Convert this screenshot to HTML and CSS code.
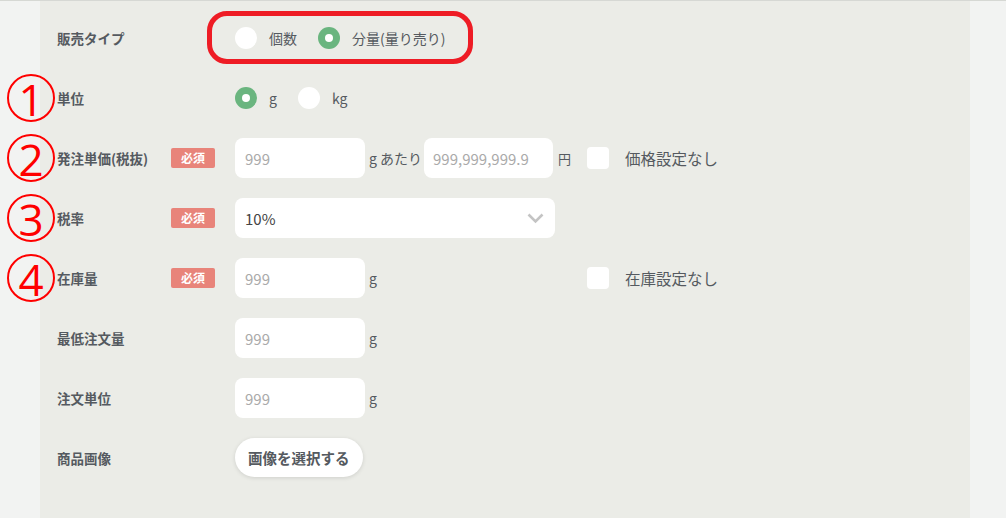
FILE: index.html
```html
<!DOCTYPE html>
<html lang="ja">
<head>
    <meta charset="UTF-8">
    <title>商品登録</title>
    <link rel="stylesheet" href="styles.css">
</head>
<body>
    <div class="panel">
        <div class="row">
            <div class="label-cell"><span class="label">販売タイプ</span></div>
            <div class="radio-group boxed">
                <label class="radio"><span class="dot"></span>個数</label>
                <label class="radio"><span class="dot on"></span>分量(量り売り)</label>
            </div>
        </div>

        <div class="row">
            <span class="mark">1</span>
            <div class="label-cell"><span class="label">単位</span></div>
            <div class="radio-group">
                <label class="radio"><span class="dot on"></span>g</label>
                <label class="radio"><span class="dot"></span>kg</label>
            </div>
        </div>

        <div class="row">
            <span class="mark">2</span>
            <div class="label-cell"><span class="label">発注単価(税抜)</span><span class="req">必須</span></div>
            <div class="field-main">
                <input class="text" type="text" placeholder="999">
                <span class="unit">g あたり</span>
                <input class="text price" type="text" placeholder="999,999,999.9">
                <span class="unit yen">円</span>
            </div>
            <label class="check"><span class="box"></span>価格設定なし</label>
        </div>

        <div class="row">
            <span class="mark">3</span>
            <div class="label-cell"><span class="label">税率</span><span class="req">必須</span></div>
            <div class="select">
                <span>10%</span>
                <svg width="17" height="11" viewBox="0 0 17 11"><path d="M1.5 1.5 L8.5 8.5 L15.5 1.5" fill="none" stroke="#c4c4c4" stroke-width="2.6"/></svg>
            </div>
        </div>

        <div class="row">
            <span class="mark">4</span>
            <div class="label-cell"><span class="label">在庫量</span><span class="req">必須</span></div>
            <div class="field-main">
                <input class="text" type="text" placeholder="999">
                <span class="unit">g</span>
            </div>
            <label class="check"><span class="box"></span>在庫設定なし</label>
        </div>

        <div class="row">
            <div class="label-cell"><span class="label">最低注文量</span></div>
            <input class="text" type="text" placeholder="999">
            <span class="unit">g</span>
        </div>

        <div class="row">
            <div class="label-cell"><span class="label">注文単位</span></div>
            <input class="text" type="text" placeholder="999">
            <span class="unit">g</span>
        </div>

        <div class="row">
            <div class="label-cell"><span class="label">商品画像</span></div>
            <button class="pick">画像を選択する</button>
        </div>
    </div>
</body>
</html>
```

FILE: styles.css
```css
body {
    margin: 0;
    background: #f2f3f2;
    border-top: 1px solid #d6d8d4;
    font-family: "Noto Sans CJK JP", "Noto Sans", sans-serif;
    color: #555a60;
}
.panel {
    background: #ebece7;
    margin: 0 36px 0 40px;
    padding: 7px 17px 0;
    height: 517px;
    box-sizing: border-box;
}
.row {
    position: relative;
    display: flex;
    align-items: center;
    height: 60px;
}
.mark {
    position: absolute;
    left: -50px;
    top: 6px;
    width: 48px;
    height: 48px;
    box-sizing: border-box;
    border: 2.5px solid #ff0000;
    border-radius: 50%;
    display: flex;
    align-items: center;
    justify-content: center;
    font-family: "Open Sans", "Noto Sans", sans-serif;
    font-size: 44px;
    line-height: 1;
    padding-top: 1px;
    color: #ff0000;
}
.label-cell {
    display: flex;
    align-items: center;
    width: 178px;
    flex-shrink: 0;
}
.label {
    width: 114px;
    font-size: 13.5px;
    font-weight: bold;
    white-space: nowrap;
}
.req {
    width: 44px;
    height: 20px;
    line-height: 20px;
    background: #e8847a;
    color: #fff;
    font-size: 12px;
    font-weight: bold;
    text-align: center;
    border-radius: 2px;
}
.radio-group {
    position: relative;
    display: flex;
    align-items: center;
}
.boxed::before {
    content: "";
    position: absolute;
    left: -28px;
    top: -16px;
    width: 266px;
    height: 53px;
    box-sizing: border-box;
    border: 5px solid #ee1c25;
    border-radius: 20px;
}
.radio {
    display: flex;
    align-items: center;
    font-size: 14px;
    margin-right: 21px;
}
.dot {
    width: 22px;
    height: 22px;
    border-radius: 50%;
    background: #fff;
    margin-right: 12px;
    position: relative;
}
.dot.on {
    background: #6ab57f;
}
.dot.on::after {
    content: "";
    position: absolute;
    left: 7px;
    top: 7px;
    width: 8px;
    height: 8px;
    border-radius: 50%;
    background: #fff;
}
.field-main {
    display: flex;
    align-items: center;
    width: 352px;
    flex-shrink: 0;
}
.text {
    width: 130px;
    height: 40px;
    box-sizing: border-box;
    border: none;
    border-radius: 8px;
    background: #fff;
    padding: 0 10px;
    font-family: inherit;
    font-size: 15px;
    color: #444;
    outline: none;
}
.text::placeholder {
    color: #aaaaaa;
}
.text.price {
    width: 129px;
    margin-left: 2px;
    padding-left: 9px;
}
.unit {
    margin-left: 4px;
    font-size: 14px;
}
.unit.yen {
    margin-left: 5px;
    font-size: 13px;
}
.check {
    display: flex;
    align-items: center;
    font-size: 15.5px;
}
.box {
    width: 22px;
    height: 22px;
    background: #fff;
    border-radius: 4px;
    margin-right: 16px;
}
.select {
    display: flex;
    align-items: center;
    justify-content: space-between;
    width: 320px;
    height: 40px;
    box-sizing: border-box;
    background: #fff;
    border-radius: 8px;
    padding: 0 11px 0 10px;
    font-size: 15px;
    color: #444;
}
.pick {
    height: 39px;
    padding: 0 13px;
    border: none;
    border-radius: 20px;
    background: #fff;
    box-shadow: 0 1px 4px rgba(0, 0, 0, 0.12);
    font-family: inherit;
    font-size: 14.5px;
    font-weight: bold;
    color: #555a60;
    margin-top: -1px;
}
```
